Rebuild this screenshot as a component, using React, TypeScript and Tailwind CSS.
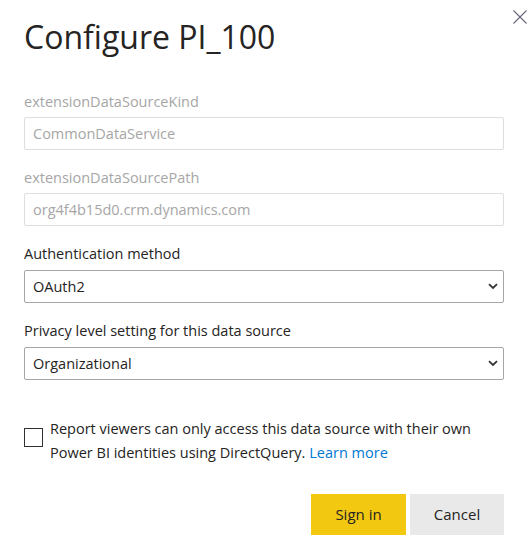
import React from "react";

const font = { fontFamily: '"Open Sans", "Noto Sans", Arial, sans-serif' };

function Chevron() {
  return (
    <svg width="10" height="7" viewBox="0 0 10 7" className="block">
      <path d="M1 1.2 L5 5 L9 1.2" fill="none" stroke="#333333" strokeWidth="1.8" />
    </svg>
  );
}

function DisabledField({ label, value }: { label: string; value: string }) {
  return (
    <div className="flex flex-col">
      <div className="text-[14.5px] leading-[20px] text-[#a6a6a6]">{label}</div>
      <div className="mt-[5px] flex h-[33px] items-center rounded-[2px] border border-[#dedede] bg-white px-[8px] text-[14.5px] text-[#a6a6a6]">
        {value}
      </div>
    </div>
  );
}

function SelectField({ label, value }: { label: string; value: string }) {
  return (
    <div className="flex flex-col">
      <div className="text-[14.5px] leading-[20px] text-[#252423]">{label}</div>
      <div className="mt-[6px] flex h-[33px] items-center justify-between rounded-[2px] border border-[#a6a6a6] bg-white pl-[8px] pr-[5px] text-[14.5px] text-[#252423]">
        <span>{value}</span>
        <Chevron />
      </div>
    </div>
  );
}

export default function App() {
  return (
    <div className="relative h-[539px] w-[531px] bg-white" style={font}>
      <button className="absolute right-[4px] top-[10px] h-[14px] w-[14px]" aria-label="Close">
        <svg width="14" height="14" viewBox="0 0 14 14" className="block">
          <path d="M0.5 0.5 L13.5 13.5 M13.5 0.5 L0.5 13.5" stroke="#6b6478" strokeWidth="1.1" fill="none" />
        </svg>
      </button>
      <div className="flex flex-col pl-[24px] pr-[27px] pt-[17px]">
        <h1 className="text-[32px] leading-[40px] text-[#252423]">Configure PI_100</h1>
        <div className="mt-[35px] flex flex-col gap-[18px]">
          <DisabledField label="extensionDataSourceKind" value="CommonDataService" />
          <DisabledField label="extensionDataSourcePath" value="org4f4b15d0.crm.dynamics.com" />
          <SelectField label="Authentication method" value="OAuth2" />
          <SelectField label="Privacy level setting for this data source" value="Organizational" />
        </div>
        <div className="mt-[37px] flex items-start gap-[7px]">
          <div className="mt-[11px] h-[19px] w-[19px] shrink-0 border border-[#323130] bg-white" />
          <p className="text-[14.5px] leading-[24px] text-[#252423]">
            Report viewers can only access this data source with their own
            <br />
            Power BI identities using DirectQuery.{" "}
            <a className="text-[#0078d4]">Learn more</a>
          </p>
        </div>
        <div className="mt-[29px] flex justify-end gap-[4px]">
          <button className="h-[41px] w-[95px] bg-[#f2c811] text-[15px] text-[#252423]">Sign in</button>
          <button className="h-[41px] w-[94px] bg-[#e9e9e9] text-[15px] text-[#252423]">Cancel</button>
        </div>
      </div>
    </div>
  );
}
